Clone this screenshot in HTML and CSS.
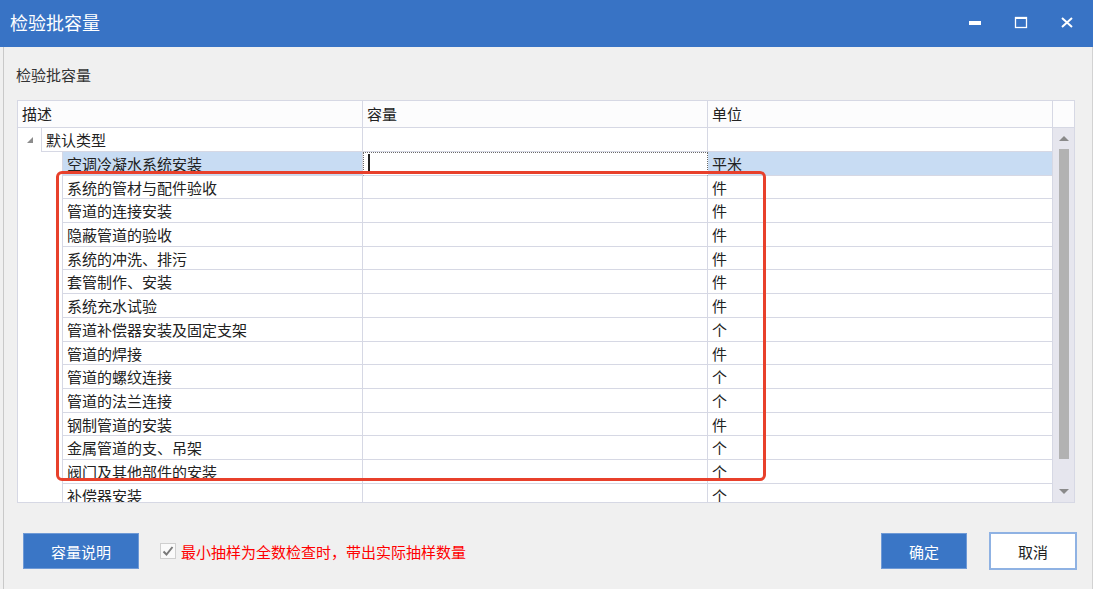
FILE: index.html
```html
<!DOCTYPE html>
<html>
    <head>
        <meta charset="utf-8">
        <title>检验批容量</title>
        <link rel="stylesheet" href="styles.css">
    </head>
    <body>
        <div class="titlebar">
            <span class="title">检验批容量</span>
            <div class="win-btns">
                <svg width="46" height="46" viewBox="0 0 46 46"><rect x="17" y="21" width="12" height="4" fill="#fff"/></svg>
                <svg width="46" height="46" viewBox="0 0 46 46"><rect x="17.5" y="17.5" width="11" height="10" fill="none" stroke="#fff" stroke-width="1.3"/><rect x="17" y="17" width="12" height="2" fill="#fff"/></svg>
                <svg width="46" height="46" viewBox="0 0 46 46"><path d="M18 18 L28 27 M28 18 L18 27" stroke="#fff" stroke-width="2"/></svg>
            </div>
        </div>
        <div class="window">
            <div class="caption">检验批容量</div>
            <div class="grid">
                <div class="head">
                    <div class="hcell">描述</div>
                    <div class="hcell">容量</div>
                    <div class="hcell">单位</div>
                    <div class="hcell"></div>
                </div>
                <div class="gbody">
                    <div class="rows">
                        <div class="row group">
                            <div class="indent"><span class="arrow"></span></div>
                            <div class="cell first">默认类型</div>
                            <div class="cell"></div>
                            <div class="cell"></div>
                        </div>
                        <div class="row child selected">
                            <div class="indent"></div>
                            <div class="cell first">空调冷凝水系统安装</div>
                            <div class="cell editing"><span class="caret"></span></div>
                            <div class="cell">平米</div>
                        </div>
                        <div class="row child"><div class="indent"></div><div class="cell first">系统的管材与配件验收</div><div class="cell"></div><div class="cell">件</div></div>
                        <div class="row child"><div class="indent"></div><div class="cell first">管道的连接安装</div><div class="cell"></div><div class="cell">件</div></div>
                        <div class="row child"><div class="indent"></div><div class="cell first">隐蔽管道的验收</div><div class="cell"></div><div class="cell">件</div></div>
                        <div class="row child"><div class="indent"></div><div class="cell first">系统的冲洗、排污</div><div class="cell"></div><div class="cell">件</div></div>
                        <div class="row child"><div class="indent"></div><div class="cell first">套管制作、安装</div><div class="cell"></div><div class="cell">件</div></div>
                        <div class="row child"><div class="indent"></div><div class="cell first">系统充水试验</div><div class="cell"></div><div class="cell">件</div></div>
                        <div class="row child"><div class="indent"></div><div class="cell first">管道补偿器安装及固定支架</div><div class="cell"></div><div class="cell">个</div></div>
                        <div class="row child"><div class="indent"></div><div class="cell first">管道的焊接</div><div class="cell"></div><div class="cell">件</div></div>
                        <div class="row child"><div class="indent"></div><div class="cell first">管道的螺纹连接</div><div class="cell"></div><div class="cell">个</div></div>
                        <div class="row child"><div class="indent"></div><div class="cell first">管道的法兰连接</div><div class="cell"></div><div class="cell">个</div></div>
                        <div class="row child"><div class="indent"></div><div class="cell first">钢制管道的安装</div><div class="cell"></div><div class="cell">件</div></div>
                        <div class="row child"><div class="indent"></div><div class="cell first">金属管道的支、吊架</div><div class="cell"></div><div class="cell">个</div></div>
                        <div class="row child"><div class="indent"></div><div class="cell first">阀门及其他部件的安装</div><div class="cell"></div><div class="cell">个</div></div>
                        <div class="row child"><div class="indent"></div><div class="cell first">补偿器安装</div><div class="cell"></div><div class="cell">个</div></div>
                    </div>
                    <div class="scrollbar">
                        <div class="sb-btn"><span class="tri-up"></span></div>
                        <div class="thumb"></div>
                        <div class="sb-space"></div>
                        <div class="sb-btn"><span class="tri-down"></span></div>
                    </div>
                </div>
            </div>
            <div class="footer">
                <button class="btn primary wide">容量说明</button>
                <span class="check">
                    <svg width="12" height="12" viewBox="0 0 12 12"><path d="M1.5 6.5 L4.5 9.5 L10.5 2" fill="none" stroke="#7a7a7a" stroke-width="2"/></svg>
                </span>
                <span class="note">最小抽样为全数检查时，带出实际抽样数量</span>
                <div class="actions">
                    <button class="btn primary">确定</button>
                    <button class="btn plain">取消</button>
                </div>
            </div>
        </div>
        <div class="mark"></div>
    </body>
</html>
```

FILE: styles.css
```css
html, body{
    margin: 0;
    padding: 0;
}
body{
    width: 1093px;
    height: 589px;
    overflow: hidden;
    background-color: #f0f0f0;
    font-family: "Noto Sans CJK SC", "Microsoft YaHei", sans-serif;
    color: #222;
}
.titlebar{
    height: 47px;
    background-color: #3873c5;
    display: flex;
    align-items: center;
    justify-content: space-between;
}
.title{
    color: #fff;
    font-size: 18px;
    padding-left: 10px;
    line-height: 24px;
    margin-top: -3px;
}
.win-btns{
    display: flex;
    align-items: center;
    margin-right: 3px;
    margin-top: -1px;
}
.win-btns svg{
    display: block;
}
.window{
    height: 542px;
    box-shadow: inset 3px 0 0 #f0f0f0, inset 4px 0 0 #c9c9c9, inset -1px 0 0 #d2d2d2;
}
.caption{
    font-size: 15px;
    line-height: 20px;
    height: 20px;
    padding: 18px 0 0 16px;
    margin-bottom: 15px;
    color: #333;
}
.grid{
    margin-left: 17px;
    width: 1056px;
    height: 401px;
    border: 1px solid #d6d8e4;
    background-color: #fff;
    overflow: hidden;
}
.head{
    display: grid;
    grid-template-columns: 345px 345px 345px 21px;
    height: 27px;
    border-bottom: 1px solid #d6d8e4;
    box-sizing: border-box;
    background-color: #fcfcfd;
}
.hcell{
    border-right: 1px solid #d6d8e4;
    font-size: 15px;
    line-height: 25px;
    padding-left: 4px;
}
.hcell:last-child{
    border-right: none;
}
.gbody{
    display: flex;
    height: 374px;
}
.rows{
    width: 1035px;
    overflow: hidden;
}
.row{
    display: grid;
    height: 23.7px;
}
.row.group{
    grid-template-columns: 23px 322px 345px 345px;
    height: 24px;
}
.row.child{
    grid-template-columns: 44px 301px 345px 345px;
}
.indent{
    position: relative;
}
.arrow{
    position: absolute;
    left: 9px;
    top: 9px;
    width: 0;
    height: 0;
    border-left: 6px solid transparent;
    border-bottom: 6px solid #8c8c8c;
}
.cell{
    box-sizing: border-box;
    border-right: 1px solid #d6d8e4;
    border-bottom: 1px solid #d6d8e4;
    font-size: 15px;
    line-height: 22px;
    padding: 1px 0 0 4px;
    white-space: nowrap;
    overflow: hidden;
}
.cell.first{
    border-left: 1px solid #d6d8e4;
}
.group .cell.first{
    padding-left: 4px;
}
.selected .cell{
    background-color: #c8dcf3;
}
.selected .cell.editing{
    background-color: #fff;
    border: 1px dotted #6a6a6a;
    border-bottom: 1px solid #d6d8e4;
    position: relative;
}
.caret{
    position: absolute;
    left: 4px;
    top: 1px;
    width: 2px;
    height: 19px;
    background-color: #222;
}
.scrollbar{
    width: 21px;
    background-color: #e6e6ee;
    display: flex;
    flex-direction: column;
    align-items: center;
}
.sb-btn{
    height: 21px;
    display: flex;
    align-items: center;
    justify-content: center;
}
.tri-up, .tri-down{
    width: 0;
    height: 0;
    border-left: 5px solid transparent;
    border-right: 5px solid transparent;
}
.tri-up{
    border-bottom: 5px solid #8a8a8a;
}
.tri-down{
    border-top: 5px solid #8a8a8a;
}
.thumb{
    width: 10px;
    height: 310px;
    background-color: #b2b2b2;
}
.sb-space{
    flex: 1;
}
.footer{
    display: flex;
    align-items: center;
    margin-top: 29px;
    padding: 0 16px 0 23px;
}
.btn{
    font-family: "Noto Sans CJK SC", "Microsoft YaHei", sans-serif;
    font-size: 15px;
    height: 36px;
    padding: 0;
    cursor: pointer;
}
.btn.primary{
    background-color: #3a76c6;
    border: 1px solid #6f9ad6;
    color: #fff;
}
.btn.wide{
    width: 116px;
}
.check{
    width: 14px;
    height: 14px;
    margin-left: 21px;
    border: 1px solid #cfcfcf;
    background-color: #fafafa;
    display: flex;
    align-items: center;
    justify-content: center;
}
.note{
    color: #f00;
    font-size: 15px;
    margin-left: 5px;
}
.actions{
    margin-left: auto;
    display: flex;
    align-items: center;
}
.actions .btn.primary{
    width: 86px;
}
.btn.plain{
    width: 88px;
    height: 38px;
    margin-left: 22px;
    background-color: #fff;
    border: 2px solid #8fb2e3;
    color: #222;
}
.mark{
    position: absolute;
    left: 56px;
    top: 171px;
    width: 704px;
    height: 304px;
    border: 3px solid #e8402b;
    border-radius: 6px;
}
```
